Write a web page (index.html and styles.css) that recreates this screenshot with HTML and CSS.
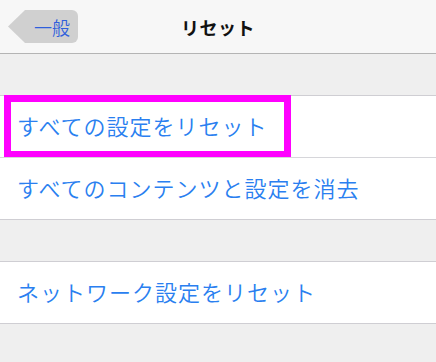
FILE: index.html
```html
<!DOCTYPE html>
<html lang="ja">
<head>
    <meta charset="UTF-8">
    <meta name="viewport" content="width=device-width, initial-scale=1.0">
    <title>リセット</title>
    <link rel="stylesheet" href="styles.css">
</head>
<body>
    <header class="navbar">
        <div class="nav-left">
            <a class="back-btn" href="#">一般</a>
        </div>
        <h1 class="nav-title">リセット</h1>
        <div class="nav-right"></div>
    </header>

    <ul class="group">
        <li class="row row-marked">
            すべての設定をリセット
            <span class="mark"></span>
        </li>
        <li class="row">すべてのコンテンツと設定を消去</li>
    </ul>

    <ul class="group">
        <li class="row">ネットワーク設定をリセット</li>
    </ul>
</body>
</html>
```

FILE: styles.css
```css
body {
    margin: 0;
    background-color: #efefef;
    font-family: "Noto Sans CJK JP", "Noto Sans", sans-serif;
    color: #111;
}
.navbar {
    display: grid;
    grid-template-columns: 1fr auto 1fr;
    align-items: center;
    height: 53px;
    background-color: #f7f7f7;
    border-bottom: 1px solid #b4b4b4;
}
.nav-left {
    padding-left: 8px;
}
.back-btn {
    display: flex;
    align-items: center;
    justify-content: flex-end;
    box-sizing: border-box;
    width: 70px;
    height: 33px;
    padding-right: 8px;
    background-color: #d0d0d0;
    border-radius: 0 6px 6px 0;
    clip-path: polygon(17px 0, 100% 0, 100% 100%, 17px 100%, 0 50%);
    color: #2f5fdc;
    font-size: 18px;
    font-weight: 350;
    text-decoration: none;
}
.nav-title {
    margin: 0;
    font-size: 18px;
    font-weight: bold;
    letter-spacing: 0.5px;
}
.group {
    list-style: none;
    margin: 41px 0 0;
    padding: 0;
    background-color: #fff;
    border-top: 1px solid #cfced3;
    border-bottom: 1px solid #cfced3;
}
.row {
    position: relative;
    display: flex;
    align-items: center;
    box-sizing: border-box;
    height: 61px;
    padding: 0 0 3px 17px;
    color: #2a7ff0;
    font-size: 22px;
    font-weight: 350;
    letter-spacing: 1px;
}
.row + .row {
    border-top: 1px solid #d6d6da;
    height: 62px;
}
.mark {
    position: absolute;
    top: -1px;
    left: 4px;
    width: 287px;
    height: 63px;
    box-sizing: border-box;
    border: 7px solid #ff00ff;
}
```
